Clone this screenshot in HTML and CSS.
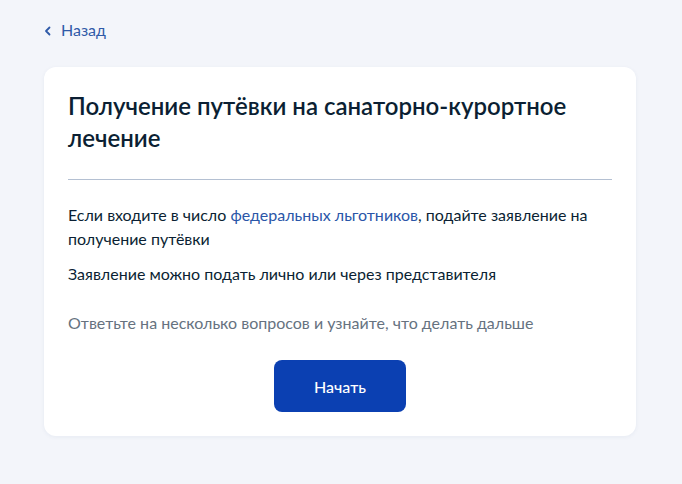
FILE: index.html
```html
<!DOCTYPE html>
<html lang="ru">
<head>
<meta charset="utf-8">
<link rel="stylesheet" href="styles.css">
</head>
<body>
<div class="page">
  <a class="back" href="#">
    <svg class="chev" width="8" height="10" viewBox="0 0 8 10"><path d="M5.5 1.5 L2 5 L5.5 8.5" fill="none" stroke="currentColor" stroke-width="1.8" stroke-linecap="round" stroke-linejoin="round"/></svg>
    <span>Назад</span>
  </a>
  <div class="card">
    <h1 class="title">Получение путёвки на санаторно-курортное лечение</h1>
    <div class="divider"></div>
    <p class="text">Если входите в число <a class="link" href="#">федеральных льготников</a>, подайте заявление на получение путёвки</p>
    <p class="text second">Заявление можно подать лично или через представителя</p>
    <p class="text muted">Ответьте на несколько вопросов и узнайте, что делать дальше</p>
    <div class="actions"><button class="btn">Начать</button></div>
  </div>
</div>
</body>
</html>
```
FILE: styles.css
```css
* { box-sizing: border-box; }
html, body { margin: 0; padding: 0; }
body {
  background: #f3f5fa;
  font-family: Lato, "Noto Sans", sans-serif;
  color: #0b1f33;
  width: 682px;
  height: 484px;
  overflow: hidden;
}
.page {
  padding: 19px 46px 0 44px;
}
.back {
  display: flex;
  align-items: center;
  gap: 9px;
  height: 22px;
  color: #2f5aa8;
  text-decoration: none;
  font-size: 16px;
  line-height: 22px;
}
.chev { margin-top: 1px; }
.card {
  margin-top: 26px;
  background: #ffffff;
  border-radius: 12px;
  box-shadow: 0 1px 4px rgba(30, 60, 120, 0.06);
  padding: 23px 24px 24px 24px;
}
.title {
  margin: 0;
  font-size: 24px;
  line-height: 32px;
  font-weight: 600;
  color: #0b1f33;
  padding-right: 40px;
}
.divider {
  height: 1px;
  background: #b4c0d2;
  margin: 25px 0 23px;
}
.text {
  margin: 0;
  font-size: 16px;
  line-height: 24px;
  color: #0b1f33;
}
.second { margin-top: 11px; }
.muted { margin-top: 25px; color: #66727f; }
.link { color: #2a56a8; text-decoration: none; }
.actions {
  display: flex;
  justify-content: center;
  margin-top: 25px;
}
.btn {
  width: 132px;
  height: 52px;
  border: none;
  border-radius: 8px;
  background: #0b40b2;
  color: #ffffff;
  font-family: Lato, "Noto Sans", sans-serif;
  font-size: 16px;
  font-weight: 500;
}
```
